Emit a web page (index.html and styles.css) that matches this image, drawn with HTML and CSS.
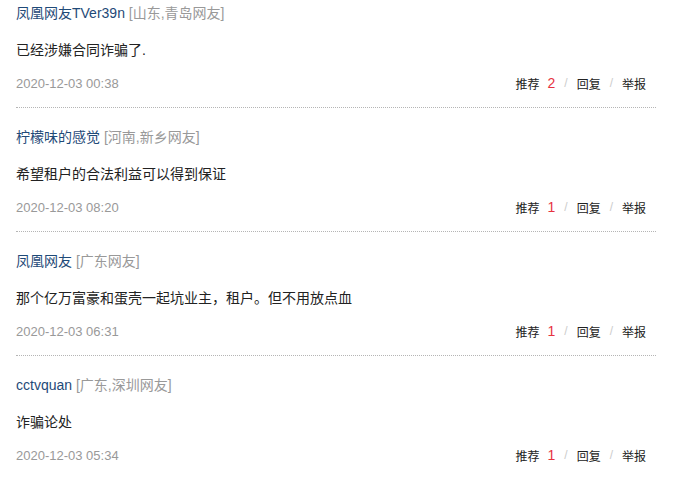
FILE: index.html
```html
<!DOCTYPE html>
<html lang="zh-CN">
<head>
    <meta charset="UTF-8">
    <title>网友评论</title>
    <link rel="stylesheet" href="styles.css">
</head>
<body>

<!-- 评论列表 -->
<div class="comments">
    <div class="item">
        <div class="user"><a href="#" class="name">凤凰网友TVer39n</a> <span class="loc">[山东,青岛网友]</span></div>
        <p class="text">已经涉嫌合同诈骗了.</p>
        <div class="meta">
            <span class="time">2020-12-03 00:38</span>
            <div class="ops">
                <a href="#">推荐</a><em class="num">2</em><span class="sep">/</span><a href="#">回复</a><span class="sep">/</span><a href="#">举报</a>
            </div>
        </div>
    </div>

    <div class="item">
        <div class="user"><a href="#" class="name">柠檬味的感觉</a> <span class="loc">[河南,新乡网友]</span></div>
        <p class="text">希望租户的合法利益可以得到保证</p>
        <div class="meta">
            <span class="time">2020-12-03 08:20</span>
            <div class="ops">
                <a href="#">推荐</a><em class="num">1</em><span class="sep">/</span><a href="#">回复</a><span class="sep">/</span><a href="#">举报</a>
            </div>
        </div>
    </div>

    <div class="item">
        <div class="user"><a href="#" class="name">凤凰网友</a> <span class="loc">[广东网友]</span></div>
        <p class="text">那个亿万富豪和蛋壳一起坑业主，租户。但不用放点血</p>
        <div class="meta">
            <span class="time">2020-12-03 06:31</span>
            <div class="ops">
                <a href="#">推荐</a><em class="num">1</em><span class="sep">/</span><a href="#">回复</a><span class="sep">/</span><a href="#">举报</a>
            </div>
        </div>
    </div>

    <div class="item">
        <div class="user"><a href="#" class="name">cctvquan</a> <span class="loc">[广东,深圳网友]</span></div>
        <p class="text">诈骗论处</p>
        <div class="meta">
            <span class="time">2020-12-03 05:34</span>
            <div class="ops">
                <a href="#">推荐</a><em class="num">1</em><span class="sep">/</span><a href="#">回复</a><span class="sep">/</span><a href="#">举报</a>
            </div>
        </div>
    </div>
</div>

</body>
</html>
```

FILE: styles.css
```css
*{margin:0;padding:0;box-sizing:border-box;font-family:"Liberation Sans","Noto Sans CJK SC",sans-serif}
body{background:#fff;color:#222}
a{text-decoration:none}

.comments{width:656px;padding-left:16px}

.item{padding:16px 0 14px;border-bottom:1px dotted #b5b5b5}
.item:first-child{padding-top:0}
.item:last-child{border-bottom:none}

.user{font-size:14px;line-height:26px;white-space:nowrap}
.user .name{color:#1f4a78}
.user .loc{color:#999}

.text{font-size:14px;line-height:26px;margin-top:11px;color:#222}

.meta{display:flex;justify-content:space-between;align-items:center;margin-top:10px;height:20px;padding-right:10px}
.meta .time{font-size:13px;color:#999}
.ops{display:flex;align-items:center;font-size:12px}
.ops a{color:#222}
.ops .num{font-style:normal;color:#e6333f;font-size:14px;margin-left:8px}
.ops .sep{color:#ccc;margin:0 9px}
```
